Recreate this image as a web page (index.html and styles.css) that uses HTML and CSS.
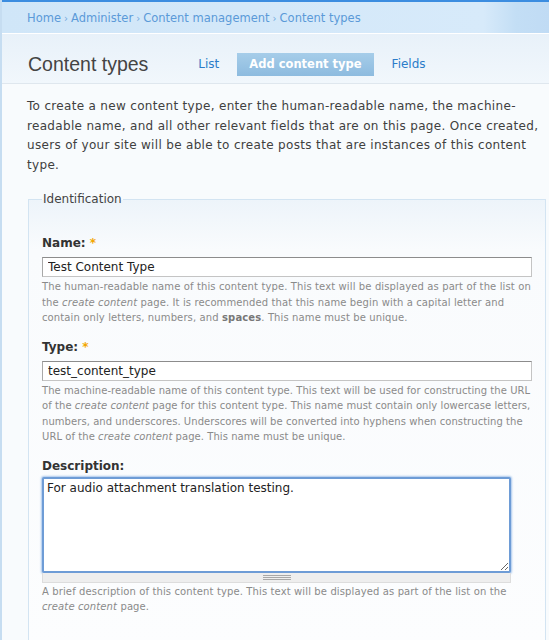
FILE: index.html
```html
<!DOCTYPE html>
<html>
<head>
<meta charset="utf-8">
<title>Content types</title>
<link rel="stylesheet" href="styles.css">
</head>
<body>
<div class="page">
  <div class="header">
    <nav class="breadcrumb"><a href="#">Home</a><span class="sep">›</span><a href="#">Administer</a><span class="sep">›</span><a href="#">Content management</a><span class="sep">›</span><a href="#">Content types</a></nav>
  </div>
  <div class="titlebar">
    <h1 class="title">Content types</h1>
    <ul class="tabs">
      <li><a href="#">List</a></li>
      <li class="active"><a href="#">Add content type</a></li>
      <li><a href="#">Fields</a></li>
    </ul>
  </div>
  <div class="content">
    <p class="intro">To create a new content type, enter the human-readable name, the machine-readable name, and all other relevant fields that are on this page. Once created,<br>users of your site will be able to create posts that are instances of this content<br>type.</p>
    <fieldset class="group">
      <legend>Identification</legend>
      <div class="form-item">
        <label class="label">Name: <span class="req">*</span></label>
        <input class="text" type="text" value="Test Content Type">
        <div class="desc">The human-readable name of this content type. This text will be displayed as part of the list on the <em>create content</em> page. It is recommended that this name begin with a capital letter and contain only letters, numbers, and <strong>spaces</strong>. This name must be unique.</div>
      </div>
      <div class="form-item">
        <label class="label">Type: <span class="req">*</span></label>
        <input class="text" type="text" value="test_content_type">
        <div class="desc desc-tight">The machine-readable name of this content type. This text will be used for constructing the URL of the <em>create content</em> page for this content type. This name must contain only lowercase letters, numbers, and underscores. Underscores will be converted into hyphens when constructing the URL of the <em>create content</em> page. This name must be unique.</div>
      </div>
      <div class="form-item">
        <label class="label label-area">Description:</label>
        <textarea class="area">For audio attachment translation testing.</textarea>
        <div class="grippie"><span class="grip"></span></div>
        <div class="desc">A brief description of this content type. This text will be displayed as part of the list on the <em>create content</em> page.</div>
      </div>
    </fieldset>
  </div>
</div>
</body>
</html>
```

FILE: styles.css
```css
html, body {
  margin: 0;
  padding: 0;
}
body {
  background: #f8fbfd;
  font-family: "DejaVu Sans", Verdana, sans-serif;
  color: #3c3c3c;
}
.page {
  border-left: 2px solid #c6ddf1;
  min-height: 640px;
  box-sizing: border-box;
}
.header {
  height: 33px;
  box-sizing: border-box;
  border-top: 2px solid #3c8de0;
  background: linear-gradient(to right, #d0e6f8 0%, #d7eafa 88%, #c3def5 94%, #c0dbf4 100%);
  padding: 9px 0 0 25px;
}
.breadcrumb {
  font-size: 11.5px;
  line-height: 14px;
  color: #74a9dd;
}
.breadcrumb a {
  color: #5b9ad8;
  text-decoration: none;
}
.breadcrumb .sep {
  margin: 0 3px;
  font-size: 10px;
}
.titlebar {
  border-top: 1px solid #ffffff;
  border-bottom: 1px solid #dfe7ee;
  background: linear-gradient(#e8f1f9, #f1f7fc);
  display: flex;
  align-items: center;
  padding: 12px 0 0 26px;
  box-sizing: border-box;
  height: 51px;
}
.title {
  margin: 0 38px 0 0;
  font-family: "Liberation Sans", Arial, sans-serif;
  font-weight: normal;
  font-size: 19.5px;
  color: #444;
}
.tabs {
  list-style: none;
  margin: 0;
  padding: 0;
  display: flex;
  gap: 6px;
}
.tabs a {
  display: block;
  padding: 0 12px;
  height: 23px;
  line-height: 23px;
  font-size: 12px;
  color: #2b7cc9;
  text-decoration: none;
}
.tabs .active a {
  background: linear-gradient(#a6cde9, #8dbbdf);
  color: #fff;
  font-weight: bold;
  font-size: 11.5px;
}
.content {
  padding: 13px 3px 0 25px;
}
.intro {
  margin: 0 0 17px;
  max-width: 520px;
  font-size: 12px;
  letter-spacing: 0.32px;
  line-height: 19.5px;
  color: #404040;
}
.group {
  margin: 0 0 0 1px;
  min-width: 0;
  border: 1px solid #d3e4f2;
  padding: 27px 13px 22px;
  background: linear-gradient(#edf4fa 0, #f9fbfd 50px, #fcfdfe 100%);
}
.group legend {
  padding: 0 1px;
  font-size: 12px;
  line-height: 15px;
  color: #444;
}
.form-item {
  margin-bottom: 12px;
}
.label {
  display: block;
  font-size: 12px;
  font-weight: bold;
  line-height: 18px;
  color: #333;
  margin-bottom: 5px;
}
.label-area {
  margin-bottom: 2px;
}
.req {
  color: #f2a600;
}
.text {
  display: block;
  width: 100%;
  height: 20px;
  box-sizing: border-box;
  margin: 0 0 2px;
  padding: 0 5px;
  font-family: "DejaVu Sans", Verdana, sans-serif;
  font-size: 12px;
  color: #222;
  background: #fff;
  border: 1px solid #c4c4c4;
  border-top-color: #8c8c8c;
  border-left-color: #a8a8a8;
  outline: none;
}
.area {
  display: block;
  width: 469px;
  height: 96px;
  box-sizing: border-box;
  margin: 0;
  padding: 2px 3px;
  font-family: "DejaVu Sans", Verdana, sans-serif;
  font-size: 12px;
  line-height: 15px;
  color: #222;
  background: #fff;
  border: 2px solid #6e9cd6;
  box-shadow: 0 0 2px 1px #a9c7ec;
  border-radius: 2px;
  outline: none;
  resize: vertical;
}
.grippie {
  width: 469px;
  height: 10px;
  box-sizing: border-box;
  background: #eeeeee;
  border: 1px solid #dddddd;
  border-top: none;
  display: flex;
  justify-content: center;
  align-items: center;
  margin-bottom: 1px;
}
.grip {
  width: 28px;
  height: 5px;
  background: repeating-linear-gradient(#a8a8a8 0 1px, transparent 1px 2px);
}
.desc {
  margin-right: -6px;
  font-size: 10px;
  letter-spacing: 0.12px;
  line-height: 15.5px;
  color: #8a8a8a;
}
.desc-tight {
  letter-spacing: 0.06px;
}
.desc strong {
  color: #777;
}
```
